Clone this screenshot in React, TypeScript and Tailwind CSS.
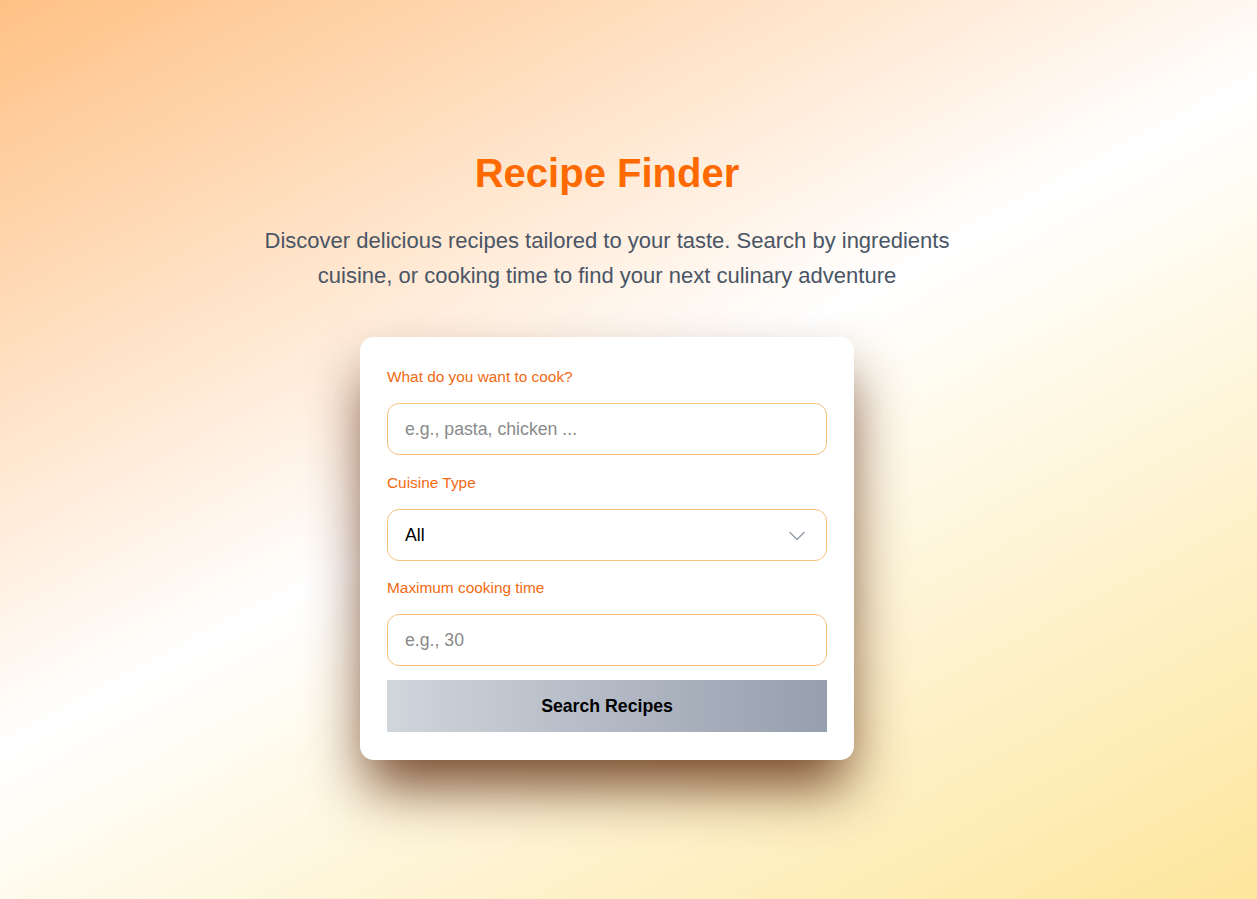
import { ChevronDown } from "lucide-react";

const RecipeFinder = () => {
  return (
    <div className="min-h-screen w-full bg-linear-[152deg] from-[#ffc185] via-white via-48% to-[#fde69c] font-['Liberation_Sans',Arial,sans-serif]">
      <div className="flex flex-col items-center pt-[149px] pr-[43px] pb-16">
        <h1 className="text-[40px] leading-[48px] font-bold text-[#ff6a00]">
          Recipe Finder
        </h1>
        <p className="mt-[26px] max-w-[720px] text-center text-[22px] leading-[35px] text-[#4a5565]">
          Discover delicious recipes tailored to your taste. Search by ingredients
          cuisine, or cooking time to find your next culinary adventure
        </p>

        <div className="mt-[44px] w-[494px] rounded-[14px] bg-white px-[27px] pt-[30px] pb-[28px] shadow-[0_32px_56px_-6px_rgba(100,50,20,0.9)]">
          <label className="block text-[15.4px] leading-5 text-[#f26a12]">
            What do you want to cook?
          </label>
          <input
            type="text"
            placeholder="e.g., pasta, chicken ..."
            className="mt-4 h-[52px] w-full rounded-xl border border-[#f7c07f] px-[17px] text-[17.7px] text-black placeholder:text-[#8a8a8a] outline-none"
          />

          <label className="mt-[18px] block text-[15.4px] leading-5 text-[#f26a12]">
            Cuisine Type
          </label>
          <div className="relative mt-4">
            <select className="h-[52px] w-full appearance-none rounded-xl border border-[#f7c07f] bg-white px-[17px] text-[17.7px] text-black outline-none">
              <option>All</option>
              <option>Italian</option>
              <option>Mexican</option>
              <option>Asian</option>
            </select>
            <ChevronDown
              size={28}
              strokeWidth={1.4}
              className="pointer-events-none absolute right-[16px] top-[13px] text-[#9ca3af]"
            />
          </div>

          <label className="mt-[17px] block text-[15.4px] leading-5 text-[#f26a12]">
            Maximum cooking time
          </label>
          <input
            type="text"
            placeholder="e.g., 30"
            className="mt-4 h-[52px] w-full rounded-xl border border-[#f7c07f] px-[17px] text-[17.7px] text-black placeholder:text-[#8a8a8a] outline-none"
          />

          <button className="mt-[14px] h-[52px] w-full bg-linear-to-r from-[#d1d5dc] to-[#969fae] text-[17.7px] font-bold text-black">
            Search Recipes
          </button>
        </div>
      </div>
    </div>
  );
};

export default function App() {
  return <RecipeFinder />;
}
